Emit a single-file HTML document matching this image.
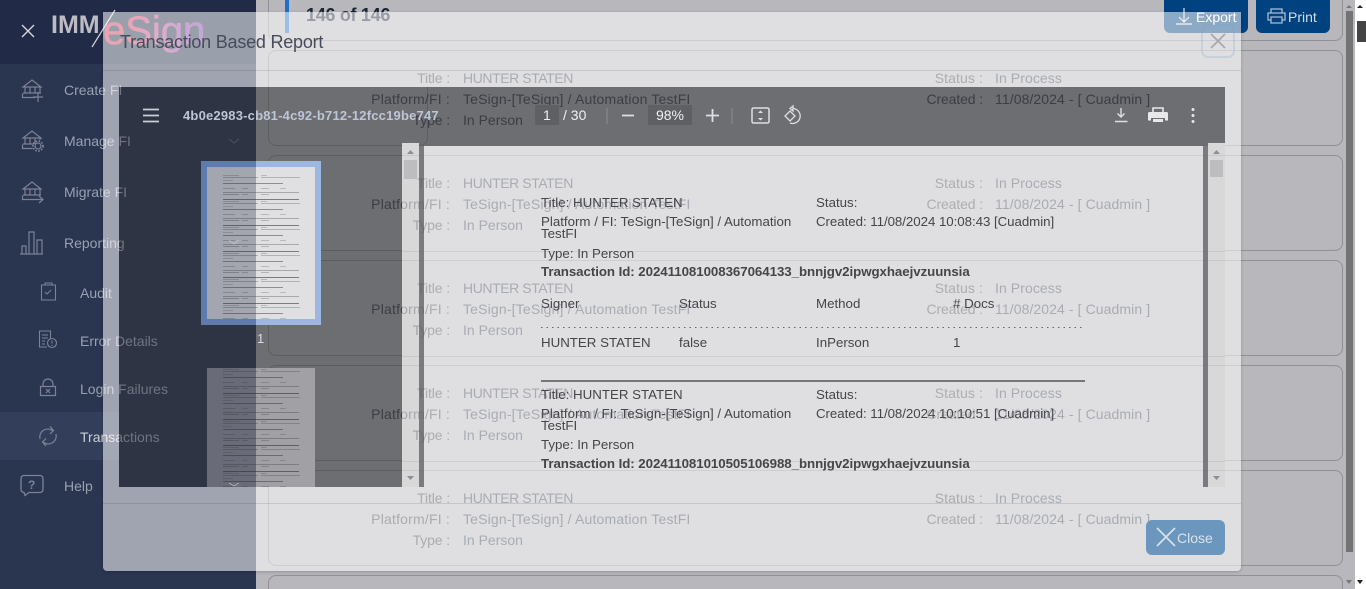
<!DOCTYPE html>
<html><head><meta charset="utf-8"><title>Transaction Based Report</title>
<style>
*{box-sizing:border-box}
html,body{margin:0;padding:0;width:1366px;height:589px;overflow:hidden;background:#b8b7bc;font-family:"Liberation Sans",sans-serif;font-size:14px}
#root{position:relative;width:1366px;height:589px;overflow:hidden;background:#b8b7bc}
.a{position:absolute}
.t{position:absolute;white-space:nowrap;line-height:18px;height:18px}
.card{position:absolute;left:268px;width:1075px;height:96px;border:1px solid #909095;border-radius:8px}
.card .t{color:#454550}
.card .v{color:#3d4858}
.n{left:64px;color:#9aa0b0}
.m{left:80px;color:#9aa0b0}
.g{color:#6f7482}
.d{color:#3c3d44}
.w .t{color:#adadb2}
.w .v{color:#a9acb4}
.l1,.l2,.k{letter-spacing:-.12px}
.h{letter-spacing:-.42px}
.e{letter-spacing:.17px}
.r{letter-spacing:.08px}
.c{letter-spacing:.09px}
.s{letter-spacing:.1px}
.f{letter-spacing:.2px}
.l1{left:31px;width:150px;text-align:right}
.l2{left:564px;width:150px;text-align:right}
.v1{left:194px}
.v2{left:726px}
.w .l1{left:-102px}
.w .l2{left:431px}
.w .v1{left:61px}
.w .v2{left:593px}
.p{position:absolute;white-space:nowrap;font-size:13.3px;line-height:14px;color:#45454a}
.b{font-weight:bold;letter-spacing:-.06px}
svg{position:absolute;overflow:hidden}
</style></head><body>
<div id="root">

<!-- page content -->
<div class="a" style="left:268px;top:0;width:1075px;height:41px;border:1px solid #909095;border-top:0;border-radius:0 0 8px 8px"></div>
<div class="a" style="left:285px;top:0;width:4px;height:33px;background:#1f6fc9"></div>
<div class="t" style="left:306px;top:6px;font-size:18px;font-weight:bold;color:#1d2535;letter-spacing:-.3px">146 of 146</div>
<div class="a" style="left:1164px;top:0;width:84px;height:33px;background:#00417f;border-radius:0 0 6px 6px"></div>
<div class="t" style="left:1196px;top:8px;color:#fff">Export</div>
<svg style="left:1164px;top:0" width="84" height="33" fill="none" stroke="#dfe6ef" stroke-width="1.2"><path d="M20 8v14M15 17l5 5 5-5M12 24h16"/></svg>
<div class="a" style="left:1256px;top:0;width:74px;height:33px;background:#00417f;border-radius:0 0 6px 6px"></div>
<div class="t" style="left:1288px;top:8px;color:#d5deea">Print</div>
<svg style="left:1256px;top:0" width="74" height="33" fill="none" stroke="#a9bdd4" stroke-width="1.3"><path d="M15 13V9h11v4M15 20h-3v-7h17v7h-3M15 17h11v6H15z"/></svg>

<div class="card" style="top:50px"><div class="t l1" style="top:18px">Title :</div><div class="t v v1 h" style="top:18px">HUNTER STATEN</div><div class="t l2 s" style="top:18px">Status :</div><div class="t v v2 r" style="top:18px">In Process</div></div>
<div class="card" style="top:155px"><div class="t l1" style="top:18px">Title :</div><div class="t v v1 h" style="top:18px">HUNTER STATEN</div><div class="t l1 f" style="top:39px">Platform/FI :</div><div class="t v v1 e" style="top:39px">TeSign-[TeSign] / Automation TestFI</div><div class="t l1" style="top:60px">Type :</div><div class="t v v1" style="top:60px">In Person</div><div class="t l2 s" style="top:18px">Status :</div><div class="t v v2 r" style="top:18px">In Process</div><div class="t l2" style="top:39px">Created :</div><div class="t v v2 c" style="top:39px">11/08/2024 - [ Cuadmin ]</div></div>
<div class="card" style="top:260px"><div class="t l1" style="top:18px">Title :</div><div class="t v v1 h" style="top:18px">HUNTER STATEN</div><div class="t l1 f" style="top:39px">Platform/FI :</div><div class="t v v1 e" style="top:39px">TeSign-[TeSign] / Automation TestFI</div><div class="t l1" style="top:60px">Type :</div><div class="t v v1" style="top:60px">In Person</div><div class="t l2 s" style="top:18px">Status :</div><div class="t v v2 r" style="top:18px">In Process</div><div class="t l2" style="top:39px">Created :</div><div class="t v v2 c" style="top:39px">11/08/2024 - [ Cuadmin ]</div></div>
<div class="card" style="top:365px"><div class="t l1" style="top:18px">Title :</div><div class="t v v1 h" style="top:18px">HUNTER STATEN</div><div class="t l1 f" style="top:39px">Platform/FI :</div><div class="t v v1 e" style="top:39px">TeSign-[TeSign] / Automation TestFI</div><div class="t l1" style="top:60px">Type :</div><div class="t v v1" style="top:60px">In Person</div><div class="t l2 s" style="top:18px">Status :</div><div class="t v v2 r" style="top:18px">In Process</div><div class="t l2" style="top:39px">Created :</div><div class="t v v2 c" style="top:39px">11/08/2024 - [ Cuadmin ]</div></div>
<div class="card" style="top:470px"><div class="t l1" style="top:18px">Title :</div><div class="t v v1 h" style="top:18px">HUNTER STATEN</div><div class="t l1 f" style="top:39px">Platform/FI :</div><div class="t v v1 e" style="top:39px">TeSign-[TeSign] / Automation TestFI</div><div class="t l1" style="top:60px">Type :</div><div class="t v v1" style="top:60px">In Person</div><div class="t l2 s" style="top:18px">Status :</div><div class="t v v2 r" style="top:18px">In Process</div><div class="t l2" style="top:39px">Created :</div><div class="t v v2 c" style="top:39px">11/08/2024 - [ Cuadmin ]</div></div>
<div class="a" style="left:268px;top:575px;width:1075px;height:14px;border:1px solid #909095;border-bottom:0;border-radius:8px 8px 0 0"></div>

<!-- page scrollbars -->
<div class="a" style="left:1346px;top:11px;width:7px;height:541px;background:#737376"></div>
<div class="a" style="left:1355px;top:0;width:11px;height:589px;background:#fff"></div>
<div class="a" style="left:1357px;top:21px;width:9px;height:21px;background:#444"></div>
<svg style="left:0;top:0" width="1366" height="589"><path d="M1346 8l3-3 3 3z" fill="#77777a"/><path d="M1357 8l3-3 3 3z" fill="#222"/><path d="M1346 580l3 4 3-4z" fill="#77777a"/><path d="M1357 580l3 4 3-4z" fill="#222"/></svg>

<!-- sidebar -->
<div class="a" style="left:0;top:0;width:256px;height:589px;background:#2a3550"></div>
<div class="a" style="left:0;top:0;width:256px;height:64px;background:#212a47"></div>
<div class="a" style="left:0;top:412px;width:256px;height:48px;background:#333e5a"></div>
<div class="t" style="left:51px;top:11px;font-size:25px;line-height:28px;height:28px;font-weight:bold;color:#bcbcc2">IMM</div>
<div class="t" style="left:103px;top:8px;font-size:40px;line-height:46px;height:46px;background:linear-gradient(90deg,#d33754 0%,#d33754 28%,#b84a98 55%,#6a3fb0 100%);-webkit-background-clip:text;background-clip:text;color:transparent;-webkit-text-stroke:.5px rgba(190,70,130,.55)">eSign</div>
<svg style="left:0;top:0" width="256" height="589" fill="none" stroke="#7b8296" stroke-width="1.2">
<path d="M22 25l12 12M34 25L22 37" stroke="#d5d7dc" stroke-width="1.4"/>
<path d="M115 10L92 47" stroke="#d5d5d8" stroke-width="1.2"/>
<path d="M23 87l9-7 9 7zM25 87v6M30 87v6M35 87v6M40 87v6M23 93h18M22.500 93.500v4h13"/>
<path d="M38 92v10M33 97h10"/>
<path d="M23 138l9-7 9 7zM25 138v6M30 138v6M35 138v6M40 138v2M23 144h11M22.500 144.500v4h10"/><circle cx="38" cy="146" r="3"/><circle cx="38" cy="146" r="5" stroke-dasharray="1.500 1.500" stroke-width="1.800"/>
<path d="M23 189l9-7 9 7zM25 189v6M30 189v6M35 189v6M40 189v6M23 195h18M22.500 195.500v4h20M39 196l4 3.500-4 3.500"/>
<path d="M20 254h23M22 254v-8h4v8M29 254v-22h5v22M37 254v-14h5v14"/>
<path d="M41.500 285h14v15h-14zM45 285v-2h7v2M45 292l2 2 4-4" stroke-width="1.100"/>
<path d="M47 347h-7.500v-16h11v8M42 335h6M42 338h6M42 341h3M42 344h3" stroke-width="1.100"/><circle cx="52" cy="343" r="4.500" stroke-width="1.100"/><path d="M52 340.500v3M52 345v1" stroke-width="1.100"/>
<path d="M40.500 386.500h15v9h-15zM43 386v-2a5 5 0 0 1 10 0v2M46 389l4 4M50 389l-4 4"/>
<path d="M53 431a8 8 0 0 0-13 8M43 442a8 8 0 0 0 13-8M50 426.500l3.500 4-3.500 3.500M46 446L42.500 442l3.500-3.500"/>
<path d="M24 475.500h16a3 3 0 0 1 3 3v11a3 3 0 0 1-3 3H29l-4 3-1-3a3 3 0 0 1-3-3v-11a3 3 0 0 1 3-3z" stroke-width="1.300"/>
</svg>
<div class="t" style="left:28px;top:476px;font-size:12px;font-weight:bold;color:#7b8296">?</div>
<div class="t n" style="top:81px">Create FI</div>
<div class="t n" style="top:132px">Manage FI</div>
<div class="t n" style="top:183px">Migrate FI</div>
<div class="t n" style="top:234px">Reporting</div>
<div class="t m" style="top:284px">Audit</div>
<div class="t m" style="top:332px">Error Details</div>
<div class="t m" style="top:380px">Login Failures</div>
<div class="t m" style="top:428px;color:#ccd0d8">Transactions</div>
<div class="t n" style="top:477px">Help</div>

<!-- modal -->
<div class="a" style="left:103px;top:12px;width:1138px;height:559px;background:rgba(255,255,255,.55);border-radius:0 0 4px 4px;box-shadow:0 1px 3px rgba(0,0,0,.2)"></div>
<div class="a" style="left:103px;top:70px;width:1138px;height:1px;background:rgba(0,0,0,.11)"></div>
<div class="a" style="left:103px;top:503px;width:1138px;height:1px;background:rgba(0,0,0,.11)"></div>
<div class="t" style="left:120px;top:32px;font-size:18px;line-height:20px;height:20px;color:#474b5a;letter-spacing:-.22px">Transaction Based Report</div>
<div class="a" style="left:1201px;top:24px;width:34px;height:34px;border:2px solid rgba(120,160,205,.22);border-radius:7px"></div>
<svg style="left:1201px;top:24px" width="34" height="34" fill="none" stroke="#a6a7ad" stroke-width="1.6"><path d="M10 10l14 14M24 10L10 24"/></svg>
<div class="a" style="left:1146px;top:520px;width:79px;height:35px;background:#6b96bd;border-radius:6px"></div>
<svg style="left:1146px;top:520px" width="79" height="35" fill="none" stroke="#d8e0e8" stroke-width="1.800"><path d="M11 8l18 18M29 8L11 26"/></svg>
<div class="t" style="left:1177px;top:529px;color:#dbe3ea">Close</div>

<!-- pdf viewer: left panel over sidebar -->
<div class="a" style="left:119px;top:87px;width:137px;height:400px;background:#2e3443;overflow:hidden">
 <div class="t g" style="left:-55px;top:-6px">Create FI</div>
 <div class="t g" style="left:-55px;top:45px">Manage FI</div>
 <div class="t g" style="left:-55px;top:96px">Migrate FI</div>
 <div class="t g" style="left:-55px;top:147px">Reporting</div>
 <div class="t g" style="left:-39px;top:245px">Error Details</div>
 <div class="t g" style="left:-39px;top:293px">Login Failures</div>
 <div class="t g" style="left:-39px;top:341px">Transactions</div>
 <svg style="left:0;top:0" width="137" height="400" fill="none" stroke="#4c5263"><path d="M110 52l5 4 5-4"/></svg>
</div>
<!-- panel over content + toolbar -->
<div class="a" style="left:256px;top:87px;width:969px;height:59px;background:#6d6e72"></div>
<div class="a" style="left:256px;top:146px;width:146px;height:341px;background:#6d6e72"></div>
<div class="a" style="left:256px;top:87px;width:969px;height:400px;overflow:hidden">
 <div class="a" style="left:12px;top:-37px;width:160px;height:96px;border:1px solid #5c5d61;border-radius:8px"></div>
 <div class="a" style="left:12px;top:68px;width:160px;height:96px;border:1px solid #5c5d61;border-radius:8px"></div>
 <div class="a" style="left:12px;top:173px;width:160px;height:96px;border:1px solid #5c5d61;border-radius:8px"></div>
 <div class="a" style="left:12px;top:278px;width:160px;height:96px;border:1px solid #5c5d61;border-radius:8px"></div>
 <div class="a" style="left:12px;top:383px;width:160px;height:17px;border:1px solid #5c5d61;border-bottom:0;border-radius:8px 8px 0 0"></div>
 <div class="a" style="left:146px;top:59px;width:823px;height:341px;background:#dfdfe1"></div>
</div>
<!-- washed card text in the viewer area -->
<div class="a w" style="left:402px;top:146px;width:823px;height:341px;overflow:hidden">
 <div class="a" style="left:0;top:9px;width:823px;height:1px;background:#cfcfd2"></div>
 <div class="t l1" style="top:28px">Title :</div><div class="t v v1 h" style="top:28px">HUNTER STATEN</div><div class="t l2 s" style="top:28px">Status :</div><div class="t v v2 r" style="top:28px">In Process</div>
 <div class="t l1 f" style="top:49px">Platform/FI :</div><div class="t v v1 e" style="top:49px">TeSign-[TeSign] / Automation TestFI</div><div class="t l2" style="top:49px">Created :</div><div class="t v v2 c" style="top:49px">11/08/2024 - [ Cuadmin ]</div>
 <div class="t l1" style="top:70px">Type :</div><div class="t v v1" style="top:70px">In Person</div>
 <div class="a" style="left:0;top:105px;width:823px;height:1px;background:#cfcfd2"></div>
 <div class="a" style="left:0;top:114px;width:823px;height:1px;background:#cfcfd2"></div>
 <div class="t l1" style="top:133px">Title :</div><div class="t v v1 h" style="top:133px">HUNTER STATEN</div><div class="t l2 s" style="top:133px">Status :</div><div class="t v v2 r" style="top:133px">In Process</div>
 <div class="t l1 f" style="top:154px">Platform/FI :</div><div class="t v v1 e" style="top:154px">TeSign-[TeSign] / Automation TestFI</div><div class="t l2" style="top:154px">Created :</div><div class="t v v2 c" style="top:154px">11/08/2024 - [ Cuadmin ]</div>
 <div class="t l1" style="top:175px">Type :</div><div class="t v v1" style="top:175px">In Person</div>
 <div class="a" style="left:0;top:210px;width:823px;height:1px;background:#cfcfd2"></div>
 <div class="a" style="left:0;top:219px;width:823px;height:1px;background:#cfcfd2"></div>
 <div class="t l1" style="top:238px">Title :</div><div class="t v v1 h" style="top:238px">HUNTER STATEN</div><div class="t l2 s" style="top:238px">Status :</div><div class="t v v2 r" style="top:238px">In Process</div>
 <div class="t l1 f" style="top:259px">Platform/FI :</div><div class="t v v1 e" style="top:259px">TeSign-[TeSign] / Automation TestFI</div><div class="t l2" style="top:259px">Created :</div><div class="t v v2 c" style="top:259px">11/08/2024 - [ Cuadmin ]</div>
 <div class="t l1" style="top:280px">Type :</div><div class="t v v1" style="top:280px">In Person</div>
 <div class="a" style="left:0;top:315px;width:823px;height:1px;background:#cfcfd2"></div>
 <div class="a" style="left:0;top:324px;width:823px;height:1px;background:#cfcfd2"></div>
</div>

<!-- ghost text in dark regions -->
<div class="a" style="left:256px;top:87px;width:969px;height:59px;overflow:hidden">
 <div class="t d f" style="left:0;top:3px;width:194px;text-align:right">Platform/FI :</div>
 <div class="t d e" style="left:207px;top:3px">TeSign-[TeSign] / Automation TestFI</div>
 <div class="t d k" style="left:0;top:24px;width:194px;text-align:right">Type :</div>
 <div class="t d" style="left:207px;top:24px">In Person</div>
 <div class="t d k" style="left:577px;top:3px;width:150px;text-align:right">Created :</div>
 <div class="t d c" style="left:739px;top:3px">11/08/2024 - [ Cuadmin ]</div>
</div>
<div class="a" style="left:256px;top:146px;width:146px;height:341px;overflow:hidden">
 <div class="t d f" style="left:0;top:49px;width:194px;text-align:right">Platform/FI :</div>
 <div class="t d f" style="left:0;top:154px;width:194px;text-align:right">Platform/FI :</div>
 <div class="t d f" style="left:0;top:259px;width:194px;text-align:right">Platform/FI :</div>
</div>

<!-- thumbnails -->
<div class="a" style="left:201px;top:161px;width:55px;height:164px;background:#5d7bad"></div>
<div class="a" style="left:256px;top:161px;width:65px;height:164px;background:#9db7e0"></div>
<div class="a" style="left:207px;top:167px;width:49px;height:152px;background:#a3a5af"></div>
<div class="a" style="left:256px;top:167px;width:59px;height:152px;background:#e0e0e2"></div>
<div class="a" style="left:207px;top:368px;width:49px;height:119px;background:#696c78"></div>
<div class="a" style="left:256px;top:368px;width:59px;height:119px;background:#a0a0a5"></div>
<svg style="left:0;top:0" width="400" height="589">
<defs>
<pattern id="pa" patternUnits="userSpaceOnUse" x="0" y="175" width="400" height="26"><g fill="#2a2a30"><rect x="223" y="0" width="16" height="1" opacity=".22"/><rect x="261" y="0" width="6" height="1" opacity=".22"/><rect x="223" y="2" width="35" height="1" opacity=".28"/><rect x="261" y="2" width="39" height="1" opacity=".25"/><rect x="223" y="5" width="10" height="1" opacity=".2"/><rect x="223" y="8" width="60" height="1" opacity=".45"/><rect x="223" y="13" width="12" height="1" opacity=".25"/><rect x="242" y="13" width="6" height="1" opacity=".22"/><rect x="261" y="13" width="8" height="1" opacity=".22"/><rect x="280" y="13" width="6" height="1" opacity=".2"/><rect x="223" y="17" width="76" height="1" opacity=".3"/><rect x="223" y="19" width="16" height="1" opacity=".3"/><rect x="242" y="19" width="6" height="1" opacity=".25"/><rect x="261" y="19" width="8" height="1" opacity=".25"/><rect x="223" y="24" width="76" height="1" opacity=".55"/></g></pattern>
<pattern id="pb" patternUnits="userSpaceOnUse" x="0" y="369" width="400" height="26"><g fill="#2a2a30"><rect x="223" y="0" width="16" height="1" opacity=".22"/><rect x="261" y="0" width="6" height="1" opacity=".22"/><rect x="223" y="2" width="35" height="1" opacity=".28"/><rect x="261" y="2" width="39" height="1" opacity=".25"/><rect x="223" y="5" width="10" height="1" opacity=".2"/><rect x="223" y="8" width="60" height="1" opacity=".45"/><rect x="223" y="13" width="12" height="1" opacity=".25"/><rect x="242" y="13" width="6" height="1" opacity=".22"/><rect x="261" y="13" width="8" height="1" opacity=".22"/><rect x="280" y="13" width="6" height="1" opacity=".2"/><rect x="223" y="17" width="76" height="1" opacity=".3"/><rect x="223" y="19" width="16" height="1" opacity=".3"/><rect x="242" y="19" width="6" height="1" opacity=".25"/><rect x="261" y="19" width="8" height="1" opacity=".25"/><rect x="223" y="24" width="76" height="1" opacity=".55"/></g></pattern>
</defs>
<rect x="207" y="175" width="108" height="144" fill="url(#pa)" style="filter:blur(.35px)"/>
<rect x="207" y="369" width="108" height="118" fill="url(#pb)" style="filter:blur(.35px)"/>
<path d="M229 240l5 4 5-4M229 483l5 3 5-3" fill="none" stroke="#c8c9d0" stroke-width=".7"/>
</svg>
<div class="t" style="left:257px;top:330px;font-size:13px;color:#d4dcea">1</div>

<!-- toolbar -->
<svg style="left:119px;top:87px" width="1106" height="59" fill="none" stroke="#dcdfe5">
<path d="M24 22.500h16M24 28.500h16M24 34.500h16" stroke-width="1.800" stroke="#c9ced8"/>
<path d="M503 28.500h12M587 28.500h13M593.500 22v13" stroke-width="1.800"/>
<path d="M488 21v16M613 21v16" stroke="#8b8c90"/>
<rect x="633" y="21" width="17" height="15" rx="1.500" stroke-width="1.500"/><path d="M641.500 24v2M641.500 31v2" stroke-width="1.500"/><path d="M639 26h5l-2.500-2.500zM639 31h5l-2.500 2.500z" fill="#dcdfe5" stroke="none"/>
<path d="M666 29l5-5 5 5-5 5z" stroke-width="1.300"/><path d="M674 21.500a7.500 7.500 0 1 1-3 14.500M674 19v5l-3-2.500z" stroke-width="1.300"/>
<path d="M1002 21v9M998.500 26.500l3.500 3.500 3.500-3.500M996 34.500h12.500" stroke-width="1.400"/>
<path d="M1034 25v-4h10v4" stroke="#e8e8ea" stroke-width="1.600"/><path d="M1030.500 25h17a1.500 1.500 0 0 1 1.500 1.500v7h-3v-2.500h-14v2.500h-3v-7a1.500 1.500 0 0 1 1.500-1.500z" fill="#e8e8ea" stroke="none"/><path d="M1034 32h10v3h-10z" fill="#e8e8ea" stroke="none"/>
<circle cx="1074" cy="22.500" r="1.500" fill="#e8e8ea" stroke="none"/><circle cx="1074" cy="28.500" r="1.500" fill="#e8e8ea" stroke="none"/><circle cx="1074" cy="34.500" r="1.500" fill="#e8e8ea" stroke="none"/>
</svg>
<div class="t" style="left:183px;top:107px;font-size:13px;font-weight:bold;color:#bcc6d6;letter-spacing:.2px">4b0e2983-cb81-4c92-b712-12fcc19be747</div>
<div class="a" style="left:535px;top:105px;width:24px;height:20px;background:#5f6064"></div>
<div class="t" style="left:543px;top:106px;font-size:14px;color:#f0f0f2">1</div>
<div class="t" style="left:563px;top:106px;font-size:14px;color:#f0f0f2">/ 30</div>
<div class="a" style="left:648px;top:105px;width:44px;height:20px;background:#5f6064"></div>
<div class="t" style="left:648px;top:106px;width:44px;text-align:center;font-size:14px;color:#f0f0f2">98%</div>

<!-- pdf scrollbars -->
<div class="a" style="left:402px;top:143px;width:17px;height:3px;background:#d8d8da"></div>
<div class="a" style="left:402px;top:146px;width:17px;height:341px;background:rgba(0,0,0,.03)"></div>
<div class="a" style="left:404px;top:160px;width:13px;height:19px;background:#bdbdc0"></div>
<div class="a" style="left:419px;top:146px;width:5px;height:341px;background:rgba(80,80,85,.7)"></div>
<div class="a" style="left:1203px;top:146px;width:5px;height:341px;background:rgba(80,80,85,.7)"></div>
<div class="a" style="left:1208px;top:143px;width:17px;height:3px;background:#d8d8da"></div>
<div class="a" style="left:1208px;top:146px;width:17px;height:341px;background:rgba(0,0,0,.03)"></div>
<div class="a" style="left:1210px;top:160px;width:13px;height:17px;background:#bdbdc0"></div>
<svg style="left:0;top:0" width="1366" height="589" fill="#8d8d92"><path d="M407 154l3.500-4 3.500 4zM1213 154l3.500-4 3.500 4zM407 476l3.500 4 3.500-4zM1213 476l3.500 4 3.500-4z"/></svg>

<!-- pdf page text -->
<div class="a" style="left:424px;top:146px;width:779px;height:341px;overflow:hidden">
 <div class="p" style="left:117px;top:50px">Title: HUNTER STATEN</div><div class="p" style="left:392px;top:50px">Status:</div>
 <div class="p" style="left:117px;top:69px">Platform / FI: TeSign-[TeSign] / Automation</div><div class="p" style="left:392px;top:69px;letter-spacing:-.05px">Created: 11/08/2024 10:08:43 [Cuadmin]</div>
 <div class="p" style="left:117px;top:81px">TestFI</div>
 <div class="p" style="left:117px;top:101px">Type: In Person</div>
 <div class="p b" style="left:117px;top:119px">Transaction Id: 202411081008367064133_bnnjgv2ipwgxhaejvzuunsia</div>
 <div class="p" style="left:117px;top:151px">Signer</div><div class="p" style="left:255px;top:151px">Status</div><div class="p" style="left:392px;top:151px">Method</div><div class="p" style="left:529px;top:151px"># Docs</div>
 <div class="a" style="left:117px;top:181px;width:544px;height:1px;background:repeating-linear-gradient(90deg,#666 0 1.500px,transparent 1.500px 5.500px)"></div>
 <div class="p" style="left:117px;top:190px">HUNTER STATEN</div><div class="p" style="left:255px;top:190px">false</div><div class="p" style="left:392px;top:190px">InPerson</div><div class="p" style="left:529px;top:190px">1</div>
 <div class="a" style="left:117px;top:234px;width:544px;height:2px;background:#77777a"></div>
 <div class="p" style="left:117px;top:242px">Title: HUNTER STATEN</div><div class="p" style="left:392px;top:242px">Status:</div>
 <div class="p" style="left:117px;top:261px">Platform / FI: TeSign-[TeSign] / Automation</div><div class="p" style="left:392px;top:261px;letter-spacing:-.05px">Created: 11/08/2024 10:10:51 [Cuadmin]</div>
 <div class="p" style="left:117px;top:273px">TestFI</div>
 <div class="p" style="left:117px;top:292px">Type: In Person</div>
 <div class="p b" style="left:117px;top:311px">Transaction Id: 202411081010505106988_bnnjgv2ipwgxhaejvzuunsia</div>
</div>
</div>
</body></html>
